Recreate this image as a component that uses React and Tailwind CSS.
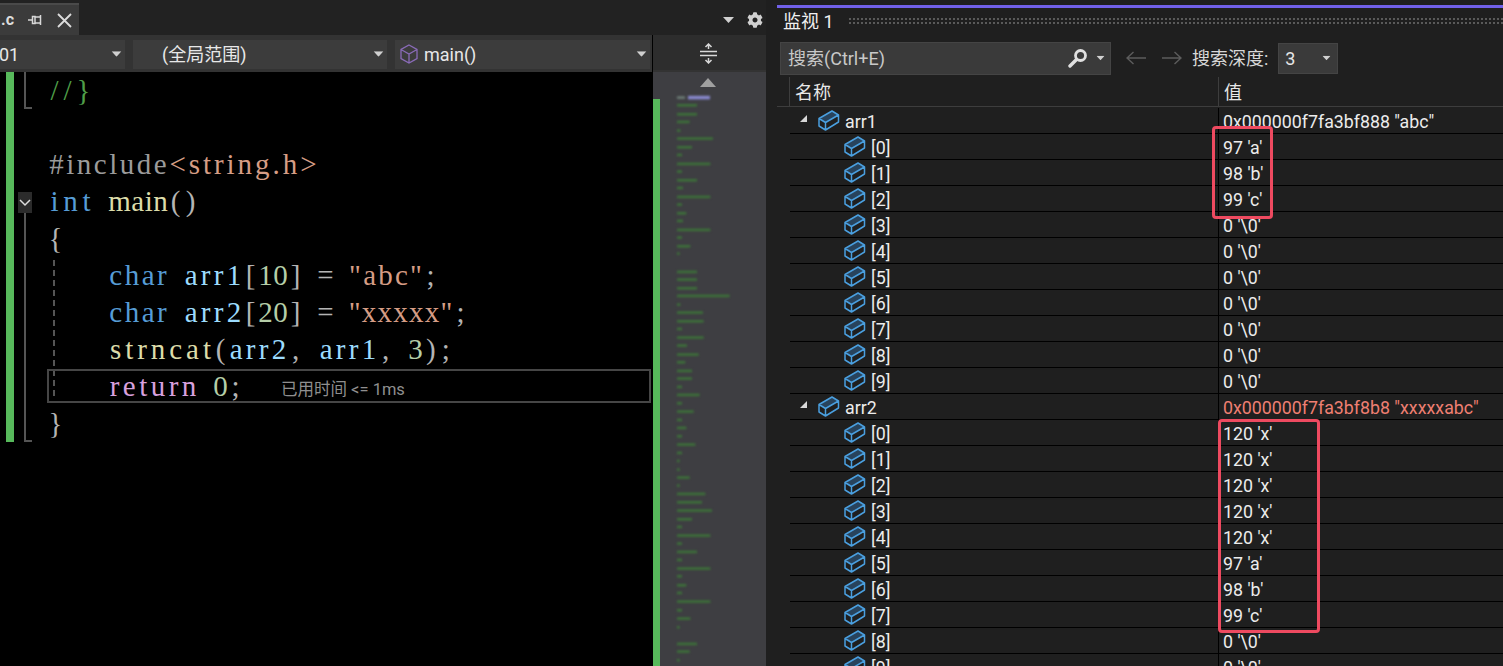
import React from "react";
import { FaCog } from "react-icons/fa";

const UI = "font-['Roboto','Noto_Sans_CJK_SC',sans-serif]";

function Caret({ className = "" }) {
  return (
    <svg width="11" height="6" viewBox="0 0 11 6" className={className}>
      <path d="M0 0H11L5.5 6Z" fill="#d0d0d0" />
    </svg>
  );
}

function Box() {
  return (
    <svg width="23" height="23" viewBox="0 0 23 23" className="shrink-0">
      <path d="M2 9.5 15 2 21.5 6 8.500 13.500Z" fill="#28435c" />
      <path d="M2 9.500 15 2 21.500 6V13L8.500 21 2 17ZM2 9.500 8.500 13.500 21.500 6M8.500 13.500V21" fill="none" stroke="#4a9fdf" strokeWidth="1.5" strokeLinejoin="round" />
    </svg>
  );
}

function Row({ name, value, top, red }) {
  return (
    <div className="flex h-[26px] ml-[13px] border-b border-black text-[17.800px] text-[#ececec]">
      <div className={`w-[428px] flex items-center shrink-0 gap-[5px] ${top ? "pl-[27px]" : "pl-[53px]"}`}>
        {top && (
          <svg width="9" height="9" viewBox="0 0 9 9" className="absolute ml-[-18px] mt-[-4px]">
            <path d="M8 1V8H1Z" fill="#d8d8d8" />
          </svg>
        )}
        <Box />
        <span className="leading-[25px] pt-[2px]">{name}</span>
      </div>
      <div className={`border-l border-black pl-[4px] whitespace-nowrap leading-[27px] ${red ? "text-[#ef7f72]" : ""}`}>{value}</div>
    </div>
  );
}

// Times-metric advance widths, so each code token can fill its cells of the 15px editor grid.
const ADV = { a: .444, b: .5, c: .444, d: .5, e: .444, g: .5, h: .5, i: .278, l: .278, m: .778, n: .5, o: .5, r: .333, s: .389, t: .278, u: .5, x: .5, "#": .5, "<": .564, ">": .564, ".": .25, "/": .278, "{": .48, "}": .48, "(": .333, ")": .333, "[": .333, "]": .333, "=": .564, '"': .408, ";": .278, ",": .25, " ": .25 };
const CODE_PX = 29;

function T({ c = "", children }) {
  const text = String(children);
  const natural = [...text].reduce((sum, ch) => sum + (ADV[ch] ?? 0.5) * CODE_PX, 0);
  const gap = (15 * text.length - natural) / text.length;
  return (
    <span
      className={`inline-block whitespace-pre ${c}`}
      style={{ width: 15 * text.length, letterSpacing: gap, textIndent: gap / 2 }}
    >
      {text}
    </span>
  );
}

function CodeLine({ children }) {
  return <div className="h-[37px] leading-[37px] pl-[48px] whitespace-nowrap">{children}</div>;
}

const BLUE = "text-[#569cd6]";
const YEL = "text-[#dcdcaa]";
const VAR = "text-[#9cdcfe]";
const NUM = "text-[#b5cea8]";
const STR = "text-[#d69d85]";

const MAP_A = [[82,98],[105,60],[132,60],[155,38],[181,10],[205,108],[231,45],[254,15],[281,100],[304,15],[330,60],[353,18],[380,100],[403,15],[429,28],[452,18],[479,100],[502,15],[528,40],[550,8],[605,60],[628,60],[654,60],[677,158],[703,10],[727,78],[753,80],[776,15],[802,80],[826,30],[853,65],[876,25]];
const MAP_B = [[14,45],[37,45],[62,15],[86,68],[111,15],[136,50],[161,15],[185,28],[210,15],[235,55],[260,15],[284,8],[310,8],[334,38],[358,8],[383,85],[408,75],[433,105],[459,45],[482,15],[508,100],[532,15],[557,60],[581,15],[607,100],[630,15],[657,28],[680,15],[706,100],[732,15],[757,40],[783,8],[833,60],[856,38],[882,8]];

function Minimap() {
  const lines = [
    ...MAP_A.map(([y, w]) => [70 - 72 + y / 3, w / 3]),
    ...MAP_B.map(([y, w]) => [366 - 72 + y / 3, w / 3]),
  ];
  return (
    <div className="relative w-[113px] flex-1 bg-[#3e3e42] overflow-hidden">
      <svg width="113" height="594" viewBox="0 0 113 594" className="block blur-[0.8px]">
        {lines.map(([y, w], i) =>
          i === 0 ? (
            <g key={i}>
              <rect x="24" y={y - 1} width="8" height="2.500" fill="#6f7f78" />
              <rect x="35" y={y - 1.500} width="22" height="3.500" fill="#8a8ad0" />
            </g>
          ) : (
            <rect key={i} x="24" y={y - 1} width={w} height="2.500" fill="#3d7239" />
          )
        )}
      </svg>
      <svg width="16" height="9" viewBox="0 0 16 9" className="absolute left-[47px] top-[6px]">
        <path d="M0 9H16L8 0Z" fill="#a0a0a0" />
      </svg>
      <div className="absolute left-0 top-[27px] bottom-0 w-[7px] bg-[#57b95b]" />
    </div>
  );
}

const arr1 = ["97 'a'", "98 'b'", "99 'c'", "0 '\\0'", "0 '\\0'", "0 '\\0'", "0 '\\0'", "0 '\\0'", "0 '\\0'", "0 '\\0'"];
const arr2 = ["120 'x'", "120 'x'", "120 'x'", "120 'x'", "120 'x'", "97 'a'", "98 'b'", "99 'c'", "0 '\\0'", "0 '\\0'"];

export default function App() {
  return (
    <div className={`relative flex h-[666px] w-[1503px] overflow-hidden bg-[#1f1f1f] ${UI}`}>
      {/* Editor column */}
      <div className="flex w-[766px] shrink-0 flex-col">
        <div className="flex h-[35px] shrink-0 items-end justify-between pr-[3px] bg-[#222222]">
          <div className="flex h-[32px] w-[79px] items-center bg-[#3b3b3b] border-t-[2px] border-[#4a4a4a] text-[#dddddd] text-[16px] font-bold">
            <span className="w-[28px] pl-[1px]">.c</span>
            <svg width="14" height="14" viewBox="0 0 14 14">
              <path d="M0 7H4M4.500 3.500H7V10.500H4.500ZM7 4H12.500V10H7M12.500 2V12" fill="none" stroke="#d8d8d8" strokeWidth="1.500" />
            </svg>
            <svg width="15" height="15" viewBox="0 0 15 15" className="ml-[15px]">
              <path d="M1 1 14 14M14 1 1 14" stroke="#dcdcdc" strokeWidth="1.800" />
            </svg>
          </div>
          <div className="flex items-center gap-[13px] pb-[7px]">
            <Caret />
            <FaCog className="text-[#d0d0d0] text-[16px]" />
          </div>
        </div>
        <div className="flex flex-1 min-h-0">
          <div className="flex w-[652px] shrink-0 flex-col">
            <div className="flex h-[37px] shrink-0 items-center gap-[8px] bg-[#333333] pr-[2px] pt-[1px] text-[18px] text-[#e8e8e8]">
              <div className="flex h-[29px] w-[125px] items-center justify-between bg-[#3c3c3c] pr-[3px]">
                <span className="-ml-[1px]">01</span>
                <Caret className="scale-90" />
              </div>
              <div className="flex h-[29px] w-[254px] items-center justify-between bg-[#3c3c3c] pl-[29px] pr-[3px]">
                <span>(全局范围)</span>
                <Caret className="scale-90" />
              </div>
              <div className="flex h-[29px] flex-1 items-center justify-between bg-[#3c3c3c] pl-[5px] pr-[3px]">
                <span className="flex items-center gap-[6px]">
                  <svg width="18" height="20" viewBox="0 0 18 20">
                    <path d="M9 1 17 5.500V14.500L9 19 1 14.500V5.500ZM1 5.500 9 10 17 5.500M9 10V19" fill="none" stroke="#8a6bb8" strokeWidth="1.300" />
                  </svg>
                  main()
                </span>
                <Caret className="scale-90" />
              </div>
            </div>
            <div className="relative flex-1 bg-black font-['Liberation_Serif',serif] text-[29px] text-[#b4b4b4]">
              <CodeLine><T c="text-[#4f9e48]">{"//}"}</T></CodeLine>
              <CodeLine> </CodeLine>
              <CodeLine><T c="text-[#9b9b9b]">#include</T><T c={STR}>{"<string.h>"}</T></CodeLine>
              <CodeLine><T c={BLUE}>int</T><T> </T><T c={YEL}>main</T><T>()</T></CodeLine>
              <CodeLine><T>{"{"}</T></CodeLine>
              <CodeLine><T>{"    "}</T><T c={BLUE}>char</T><T> </T><T c={VAR}>arr1</T><T>[</T><T c={NUM}>10</T><T>]</T><T>{" = "}</T><T c={STR}>"abc"</T><T>;</T></CodeLine>
              <CodeLine><T>{"    "}</T><T c={BLUE}>char</T><T> </T><T c={VAR}>arr2</T><T>[</T><T c={NUM}>20</T><T>]</T><T>{" = "}</T><T c={STR}>"xxxxx"</T><T>;</T></CodeLine>
              <CodeLine><T>{"    "}</T><T c={YEL}>strncat</T><T>(</T><T c={VAR}>arr2</T><T>{", "}</T><T c={VAR}>arr1</T><T>{", "}</T><T c={NUM}>3</T><T>);</T></CodeLine>
              <CodeLine>
                <T>{"    "}</T><T c="text-[#d8a0df]">return</T><T> </T><T c={NUM}>0</T><T>;</T>
                <span className={`ml-[38px] align-[1px] text-[16.500px] text-[#8f8f8f] ${UI}`}>已用时间 &lt;= 1ms</span>
              </CodeLine>
              <CodeLine><T>{"}"}</T></CodeLine>
              {/* gutter decorations */}
              <div className="absolute left-[6px] top-0 h-[370px] w-[8px] bg-[#57b95b]" />
              <div className="absolute left-[24px] top-0 h-[37px] w-[8px] border-l-[2px] border-b-[2px] border-[#555555]" />
              <div className="absolute left-[24px] top-[141px] h-[229px] w-[8px] border-l-[2px] border-b-[2px] border-[#555555]" />
              <div className="absolute left-[18px] top-[120px] flex h-[21px] w-[14px] items-center justify-center bg-[#2b2b2b]">
                <svg width="12" height="8" viewBox="0 0 12 8">
                  <path d="M1 1 6 6 11 1" fill="none" stroke="#dddddd" strokeWidth="1.500" />
                </svg>
              </div>
              <div className="absolute left-[53px] top-[188px] h-[136px] border-l-[2px] border-dashed border-[#555555]" />
              <div className="absolute left-[47px] top-[297px] h-[34px] w-[604px] border-[2px] border-[#464646]" />
            </div>
          </div>
          <div className="flex w-[114px] shrink-0 flex-col bg-[#333333] border-l border-black">
            <div className="flex h-[35px] shrink-0 items-center justify-center pr-[2px] pt-[1px] bg-[#2d2d2d]">
              <svg width="17" height="21" viewBox="0 0 17 21">
                <path d="M0 8.500H17M0 12.500H17M8.500 1V6M8.500 15V20M5.500 4 8.500 1 11.500 4M5.500 17 8.500 20 11.500 17" fill="none" stroke="#d8d8d8" strokeWidth="1.500" />
              </svg>
            </div>
            <div className="flex flex-1 pt-[2px] min-h-0">
              <Minimap />
            </div>
          </div>
        </div>
      </div>

      {/* Watch panel */}
      <div className="ml-[11px] flex flex-1 flex-col text-[#e6e6e6]">
        <div className="mt-[5px] h-[3px] shrink-0 bg-[#7160e8]" />
        <div className="flex h-[28px] shrink-0 items-center gap-[14px] pl-[6px] pb-[2px]">
          <span className="text-[18px] text-[#f0f0f0] whitespace-nowrap">监视 1</span>
          <div className="h-[8px] flex-1 bg-[radial-gradient(#5a5a5a_1px,transparent_1px)] bg-[length:4px_4px]" />
        </div>
        <div className="flex h-[38px] shrink-0 items-center pl-[3px] pt-[6px]">
          <div className="flex h-[33px] w-[331px] items-center justify-between border border-[#444444] bg-[#3a3a3a] pl-[7px] pr-[4px] text-[18px] text-[#c8c8c8]">
            <span>搜索(Ctrl+E)</span>
            <span className="flex items-center gap-[7px]">
              <svg width="20" height="20" viewBox="0 0 20 20">
                <circle cx="12.500" cy="7.500" r="5" fill="none" stroke="#e0e0e0" strokeWidth="2.800" />
                <path d="M8.500 11.500 2 18" stroke="#e0e0e0" strokeWidth="3.400" strokeLinecap="round" />
              </svg>
              <Caret className="scale-75" />
            </span>
          </div>
          <svg width="20" height="14" viewBox="0 0 20 14" className="ml-[15px]">
            <path d="M20 7H1M7.500 1 1 7 7.500 13" fill="none" stroke="#5c5c5c" strokeWidth="1.400" />
          </svg>
          <svg width="20" height="14" viewBox="0 0 20 14" className="ml-[16px]">
            <path d="M0 7H19M12.500 1 19 7 12.500 13" fill="none" stroke="#5c5c5c" strokeWidth="1.400" />
          </svg>
          <span className="ml-[10px] text-[18px] text-[#d8d8d8] whitespace-nowrap">搜索深度:</span>
          <div className="ml-[10px] flex h-[31px] w-[60px] items-center justify-between border border-[#444444] bg-[#3a3a3a] pl-[6px] pr-[5px] text-[18px]">
            <span>3</span>
            <Caret className="scale-75" />
          </div>
        </div>
        <div className="flex h-[33px] shrink-0 border-b-[1px] border-[#3d3d3d] text-[18px] text-[#e8e8e8]">
          <div className="ml-[12px] mt-[3px] w-[429px] border-l border-[#3d3d3d] pl-[5px] pt-[2px] leading-[28px]">名称</div>
          <div className="mt-[3px] flex-1 border-l border-[#3d3d3d] pl-[5px] pt-[2px] leading-[28px]">值</div>
        </div>
        <div className="pt-[1px]">
          <Row top name="arr1" value={'0x000000f7fa3bf888 "abc"'} />
          {arr1.map((v, i) => <Row key={i} name={`[${i}]`} value={v} />)}
          <Row top red name="arr2" value={'0x000000f7fa3bf8b8 "xxxxxabc"'} />
          {arr2.map((v, i) => <Row key={i} name={`[${i}]`} value={v} />)}
        </div>
      </div>

      {/* Red annotation frames */}
      <div className="absolute left-[1212px] top-[126px] h-[93px] w-[61px] rounded-[4px] border-[3px] border-[#ee4a60]" />
      <div className="absolute left-[1218px] top-[419px] h-[214px] w-[102px] rounded-[4px] border-[3px] border-[#ee4a60]" />
    </div>
  );
}
